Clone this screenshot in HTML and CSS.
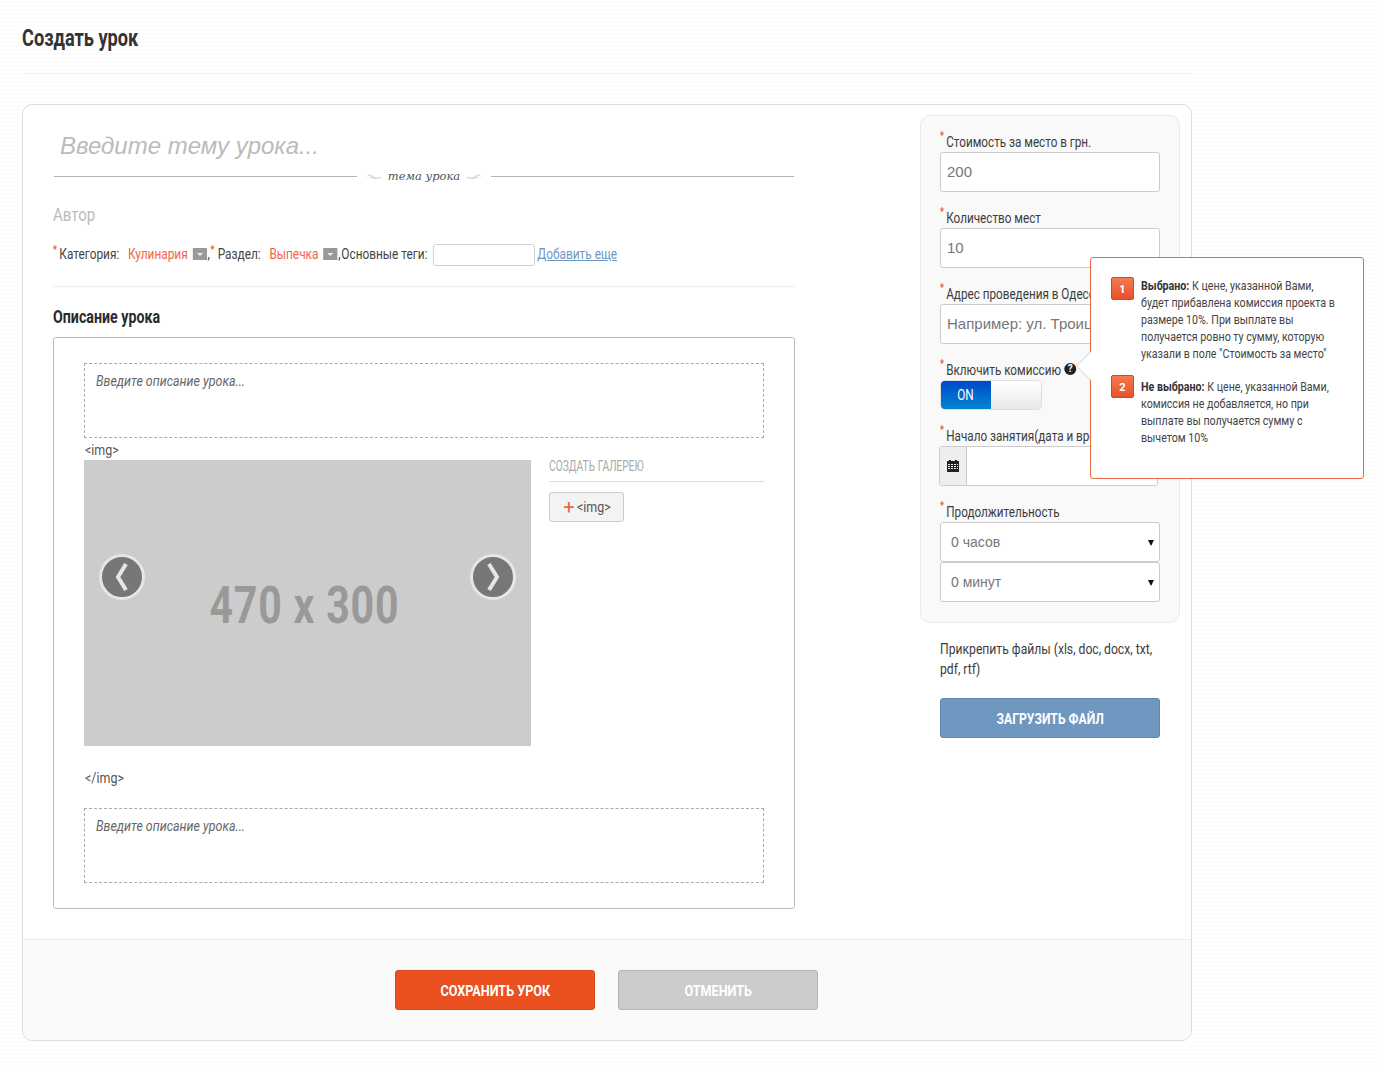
FILE: index.html
```html
<!DOCTYPE html>
<html lang="ru">
  <head>
    <meta charset="utf-8">
    <title>Создать урок</title>
    <link rel="stylesheet" href="styles.css">
  </head>
  <body>
    <div class="page">
      <div class="page-head"><h1 class="page-title narrow">Создать урок</h1></div>

      <form class="card">
        <div class="card-body">
          <div class="main">
            <input class="topic" type="text" placeholder="Введите тему урока...">
            <div class="topic-rule">
              <span class="rule"></span>
              <svg class="flourish" width="14" height="6" viewBox="0 0 14 6"><path d="M0 2.5C2 .5 4 .5 6 2.5s5 2.5 8 .5M3 3.5c2-1 4 .5 5.5 1.5" fill="none" stroke="#c8c8c8"/></svg>
              <em class="topic-caption">тема урока</em>
              <svg class="flourish" width="14" height="6" viewBox="0 0 14 6"><path d="M14 2.5C12 .5 10 .5 8 2.5S3 5 0 3M11 3.5c-2-1-4 .5-5.5 1.5" fill="none" stroke="#c8c8c8"/></svg>
              <span class="rule"></span>
            </div>

            <div class="author narrow">Автор</div>

            <div class="meta-wrap">
              <div class="meta-row narrow">
                <span class="req">*</span><span class="meta-label">Категория:</span>
                <span class="meta-value">Кулинария</span>
                <span class="drop"></span><span class="comma">,</span>
                <span class="req">*</span><span class="meta-label">Раздел:</span>
                <span class="meta-value">Выпечка</span>
                <span class="drop"></span><span class="comma">,</span><span class="meta-label">Основные теги:</span>
                <input class="tag-input" type="text">
                <a class="add-more" href="#">Добавить еще</a>
              </div>
            </div>

            <h2 class="section-title narrow">Описание урока</h2>

            <div class="editor">
              <div class="text-area"><span class="narrow">Введите описание урока...</span></div>
              <div class="tag-line tag-open"><span class="narrow">&lt;img&gt;</span></div>
              <div class="gallery">
                <div class="photo">
                  <span class="photo-size narrow-c">470 x 300</span>
                  <span class="nav nav-prev"><svg width="16" height="30" viewBox="0 0 16 30"><path d="M12 2 4 15l8 13" fill="none" stroke="#e6e6e6" stroke-width="4"/></svg></span>
                  <span class="nav nav-next"><svg width="16" height="30" viewBox="0 0 16 30"><path d="m4 2 8 13-8 13" fill="none" stroke="#e6e6e6" stroke-width="4"/></svg></span>
                </div>
                <div class="gallery-side">
                  <div class="gallery-title"><span class="narrow gallery-text">СОЗДАТЬ ГАЛЕРЕЮ</span></div>
                  <button class="add-img" type="button"><span class="plus">+</span><span class="narrow add-text">&lt;img&gt;</span></button>
                </div>
              </div>
              <div class="tag-line tag-close"><span class="narrow">&lt;/img&gt;</span></div>
              <div class="text-area"><span class="narrow">Введите описание урока...</span></div>
            </div>
          </div>

          <aside class="side">
            <div class="panel">
              <div class="field">
                <label class="field-label narrow"><span class="req">*</span>Стоимость за место в грн.</label>
                <input class="control" type="text" value="200">
              </div>
              <div class="field">
                <label class="field-label narrow"><span class="req">*</span>Количество мест</label>
                <input class="control" type="text" value="10">
              </div>
              <div class="field">
                <label class="field-label narrow"><span class="req">*</span>Адрес проведения в Одессе</label>
                <input class="control" type="text" placeholder="Например: ул. Троицкая, 10">
              </div>
              <div class="field">
                <label class="field-label narrow"><span class="req">*</span>Включить комиссию <span class="help">?</span></label>
                <div class="switch"><span class="switch-on"><span class="narrow-c">ON</span></span><span class="switch-off"></span></div>
              </div>
              <div class="field">
                <label class="field-label narrow"><span class="req">*</span>Начало занятия(дата и время)</label>
                <div class="date-group">
                  <span class="date-icon">
                    <svg width="12" height="12" viewBox="0 0 12 12"><path fill="#222" d="M0 1h2V0h2v1h4V0h2v1h2v11H0zm1 3v1h2V4zm3 0v1h2V4zm3 0v1h2V4zm3 0v1h1V4zM1 6v1h2V6zm3 0v1h2V6zm3 0v1h2V6zm3 0v1h1V6zM1 8v1h2V8zm3 0v1h2V8zm3 0v1h2V8zm3 0v1h1V8z"/></svg>
                  </span>
                  <input class="date-input" type="text">
                </div>
              </div>
              <div class="field field-last">
                <label class="field-label narrow"><span class="req">*</span>Продолжительность</label>
                <div class="select-wrap"><select class="control select"><option>0 часов</option></select></div>
                <div class="select-wrap"><select class="control select"><option>0 минут</option></select></div>
              </div>

              <div class="popover">
                <span class="popover-arrow"></span>
                <div class="hint">
                  <span class="hint-num">1</span>
                  <p class="hint-text"><b>Выбрано:</b> К цене, указанной Вами, будет прибавлена комиссия проекта в размере 10%. При выплате вы получается ровно ту сумму, которую указали в поле "Стоимость за место"</p>
                </div>
                <div class="hint">
                  <span class="hint-num">2</span>
                  <p class="hint-text"><b>Не выбрано:</b> К цене, указанной Вами, комиссия не добавляется, но при выплате вы получается сумму с вычетом 10%</p>
                </div>
              </div>
            </div>

            <div class="files">
              <p class="files-note">Прикрепить файлы (xls, doc, docx, txt, pdf, rtf)</p>
              <button class="btn btn-blue" type="button"><span class="narrow-c">ЗАГРУЗИТЬ ФАЙЛ</span></button>
            </div>
          </aside>
        </div>

        <div class="card-footer">
          <button class="btn btn-orange" type="button"><span class="narrow-c">СОХРАНИТЬ УРОК</span></button>
          <button class="btn btn-grey" type="button"><span class="narrow-c">ОТМЕНИТЬ</span></button>
        </div>
      </form>
    </div>
  </body>
</html>
```

FILE: styles.css
```css
/* reset/general */
* { box-sizing: border-box; }
body {
  margin: 0;
  font-family: "Roboto", "Liberation Sans", sans-serif;
  font-size: 15px;
  color: #3c3c3c;
  background-color: #fff;
  background-image: radial-gradient(#fafaf7 1px, transparent 1px);
  background-size: 4px 4px;
}
input, select, button { font: inherit; margin: 0; }
p { margin: 0; }

/* no narrow face is installed, so text is squeezed sideways */
.narrow { display: block; width: max-content; transform: scaleX(.79); transform-origin: 0 50%; white-space: nowrap; }
.narrow-c { display: inline-block; transform: scaleX(.84); white-space: nowrap; }

.page { width: 1192px; padding-left: 22px; }
.page-head { height: 74px; padding-top: 25px; border-bottom: 1px solid #eee; }
.page-title {
  margin: 0;
  font-size: 23px;
  line-height: 28px;
  font-weight: bold;
  color: #333;
}

/* card */
.card {
  display: block;
  margin-top: 30px;
  height: 937px;
  background: #fff;
  border: 1px solid #ddd;
  border-radius: 10px;
}
.card-body { display: flex; height: 834px; padding: 10px 11px 0 30px; justify-content: space-between; }
.card-footer {
  display: flex;
  justify-content: center;
  gap: 23px;
  height: 101px;
  padding: 30px 1px 0 0;
  background: #fafafa;
  border-top: 1px solid #eee;
  border-radius: 0 0 10px 10px;
}

/* left column */
.main { width: 742px; }
.topic {
  display: block;
  width: 100%;
  height: 40px;
  margin-top: 11px;
  padding: 0 7px;
  border: 0;
  background: transparent;
  font: italic 24px "Liberation Sans", Arial, sans-serif;
}
.topic::placeholder { color: #bbb; opacity: 1; }
.topic-rule { display: flex; align-items: center; height: 20px; padding: 0 1px; }
.rule { flex: 1; height: 1px; background: #b5b5b5; }
.flourish { margin: 1px 7px 0 10px; }
.flourish + .topic-caption + .flourish { margin: 1px 10px 0 7px; }
.topic-caption { font: italic 11.5px "DejaVu Serif", serif; color: #555; white-space: nowrap; }
.author { margin-top: 17px; font-size: 19px; line-height: 24px; color: #bbb; }

.meta-wrap { height: 60px; border-bottom: 1px solid #eee; }
.meta-row { display: flex; align-items: center; height: 54px; }
.req { color: #ea5020; font-size: 11px; line-height: 10px; font-weight: bold; }
.meta-row .req { margin-top: -9px; margin-right: 3px; }
.meta-row .comma + .req { margin-right: 4px; }
.meta-label { color: #444; }
.meta-value { margin-left: 11px; color: #f0644a; }
.drop {
  position: relative;
  width: 18px;
  height: 12px;
  margin-left: 6px;
  background: #999;
}
.drop::after {
  content: "";
  position: absolute;
  left: 5px;
  top: 5px;
  border: 4px solid transparent;
  border-top: 3px solid #eee;
  border-bottom: 0;
}
.comma { margin: 0 1px; }
.tag-input { width: 129px; height: 22px; margin: 2px 0 0 7px; border: 1px solid #ccc; border-radius: 3px; background: #fff; }
.add-more { margin-left: 3px; color: #6f97bf; }

.section-title { margin: 18px 0 8px; font-size: 18px; line-height: 24px; font-weight: bold; color: #2a2a2a; }

.editor {
  height: 572px;
  padding: 25px 30px 0;
  border: 1px solid #bbb;
  border-radius: 3px;
}
.text-area {
  height: 75px;
  padding: 8px 11px;
  border: 1px dashed #aaa;
  font-style: italic;
  color: #666;
  line-height: 18px;
}
.text-area .narrow { transform: scaleX(.83); }
.tag-line { color: #555; line-height: 20px; padding-left: 1px; }
.tag-line .narrow { transform: scaleX(.83); }
.tag-open { height: 22px; padding-top: 2px; }
.tag-close { height: 62px; padding-top: 22px; }

.gallery { display: flex; gap: 18px; }
.photo { position: relative; width: 447px; height: 286px; background: #ccc; }
.photo-size {
  display: block;
  padding: 117px 8px 0 0;
  text-align: center;
  font-size: 52px;
  line-height: 58px;
  font-weight: bold;
  letter-spacing: 1px;
  color: #999;
  transform: scaleX(.79);
}
.nav {
  position: absolute;
  top: 94px;
  display: flex;
  align-items: center;
  justify-content: center;
  width: 46px;
  height: 46px;
  background: #777;
  border: 3px solid #e6e6e6;
  border-radius: 50%;
}
.nav-prev { left: 15px; }
.nav-next { right: 15px; }
.gallery-side { flex: 1; }
.gallery-title {
  height: 22px;
  color: #aaa;
  font-size: 14px;
  line-height: 13px;
  border-bottom: 1px solid #ddd;
}
.gallery-text { transform: scaleX(.73); }
.add-img {
  display: flex;
  align-items: center;
  width: 75px;
  height: 30px;
  margin-top: 10px;
  padding: 0 0 0 11px;
  color: #555;
  background: #f3f3f3;
  border: 1px solid #ccc;
  border-radius: 3px;
}
.plus { width: 16px; color: #f0644a; font-size: 20px; line-height: 16px; }
.add-text { transform: scaleX(.83); }

/* right column */
.side { width: 260px; }
.panel {
  position: relative;
  height: 508px;
  padding: 15px 19px 0;
  background: #f9f9f9;
  border: 1px solid #e5ecee;
  border-radius: 10px;
}
.field { height: 76px; }
.field:nth-child(4) { height: 66px; }
.field-label { height: 21px; padding-top: 1px; color: #3c3c3c; line-height: 21px; transform: scaleX(.78); }
.field-label .req { display: inline-block; width: 8px; vertical-align: top; margin-top: -1px; }
.control {
  display: block;
  width: 100%;
  height: 40px;
  padding: 0 6px 2px;
  color: #777;
  font: 15px "Liberation Sans", Arial, sans-serif;
  background: #fff;
  border: 1px solid #ccc;
  border-radius: 3px;
}
.control::placeholder { color: #777; opacity: 1; }
.help {
  display: inline-block;
  vertical-align: 3px;
  width: 12px;
  height: 12px;
  margin-left: 2px;
  color: #fff;
  background: #222;
  border-radius: 50%;
  font-size: 10px;
  line-height: 12px;
  font-weight: bold;
  text-align: center;
  transform: scaleX(1.282);
}

.switch { display: flex; width: 102px; height: 30px; border: 1px solid #ddd; border-radius: 5px; overflow: hidden; }
.switch-on {
  width: 50px;
  color: #fff;
  text-align: center;
  line-height: 28px;
  background: linear-gradient(#0048cc, #0088cc);
}
.switch-on .narrow-c { transform: scaleX(.78); }
.switch-off { flex: 1; background: linear-gradient(#fff, #e9e9e9); }

.date-group { display: flex; width: 219px; height: 40px; margin-left: -1px; border: 1px solid #ccc; border-radius: 3px; overflow: hidden; }
.date-icon { display: flex; align-items: center; justify-content: center; width: 27px; background: #eee; border-right: 1px solid #ccc; }
.date-input { flex: 1; min-width: 0; border: 0; background: #fff; }

.select-wrap { position: relative; }
.select-wrap::after {
  content: "";
  position: absolute;
  right: 6px;
  top: 18px;
  border: 3.5px solid transparent;
  border-top: 6px solid #111;
  border-bottom: 0;
}
.select { appearance: none; padding: 0 10px; font-size: 14px; }

/* overlay next to the help icon */
.popover {
  position: absolute;
  left: 169px;
  top: 141px;
  width: 274px;
  height: 222px;
  padding: 19px 20px 0;
  background: #fff;
  border: 1px solid #e8693f;
  border-radius: 3px;
}
.popover-arrow {
  position: absolute;
  left: -11px;
  top: 98px;
  width: 20px;
  height: 20px;
  background: #fff;
  border: 1px solid #ddd;
  border-width: 0 0 1px 1px;
  transform: rotate(45deg);
}
.hint { position: relative; display: flex; gap: 7px; margin-bottom: 13px; }
.hint-num {
  flex: none;
  width: 23px;
  height: 23px;
  color: #fff;
  background: linear-gradient(#f47a50, #e8502a);
  border: 1px solid #d24a24;
  border-radius: 2px;
  font-size: 11px;
  font-weight: bold;
  line-height: 23px;
  text-align: center;
}
.hint-text {
  flex: none;
  width: 244px;
  font-size: 13px;
  line-height: 17px;
  color: #444;
  transform: scaleX(.82);
  transform-origin: 0 50%;
}
.hint + .hint .hint-text { padding-top: 3px; }
.hint-text b { color: #333; }

.files { padding: 16px 20px; }
.files-note {
  width: 275px;
  line-height: 20px;
  color: #3c3c3c;
  transform: scaleX(.81);
  transform-origin: 0 50%;
}
.btn {
  display: block;
  width: 200px;
  height: 40px;
  padding: 1px 0 0;
  color: #fff;
  font-size: 15px;
  font-weight: bold;
  border-radius: 3px;
}
.btn-blue { width: 220px; margin-top: 19px; background: #6f97bf; border: 1px solid #5f87ae; }
.btn-blue .narrow-c { transform: scaleX(.81); }
.btn-orange { background: #ea5020; border: 1px solid #d84a1c; }
.btn-grey { background: #ccc; border: 1px solid #b5b5b5; }
```
